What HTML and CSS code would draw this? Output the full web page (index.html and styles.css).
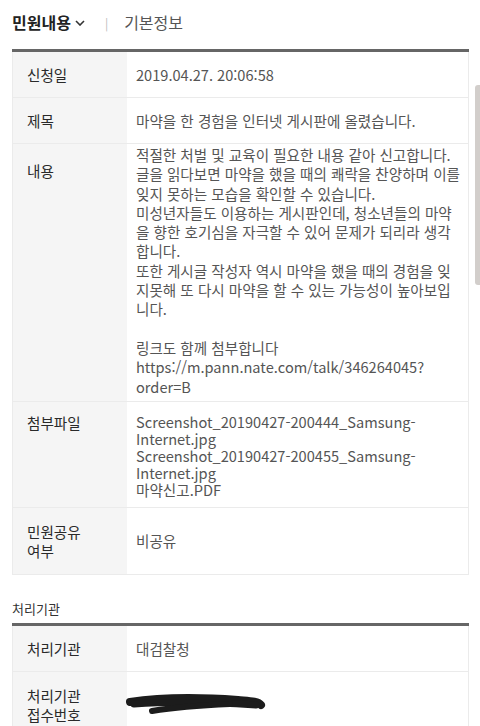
FILE: index.html
```html
<!DOCTYPE html>
<html lang="ko">
<head>
  <meta charset="UTF-8">
  <title>민원내용</title>
  <meta name="viewport" content="width=device-width, initial-scale=1">
  <link rel="stylesheet" href="styles.css">
</head>
<body>

<header class="tabs">
  <div class="tab active">민원내용
    <svg class="chev" width="10" height="6" viewBox="0 0 10 6"><path d="M1 1l4 4 4-4" fill="none" stroke="#333" stroke-width="1.6"/></svg>
  </div>
  <span class="sep">|</span>
  <div class="tab">기본정보</div>
</header>

<table class="info">
  <tr>
    <th>신청일</th>
    <td>2019.04.27. 20:06:58</td>
  </tr>
  <tr>
    <th>제목</th>
    <td>마약을 한 경험을 인터넷 게시판에 올렸습니다.</td>
  </tr>
  <tr class="top">
    <th class="pad">내용</th>
    <td class="body">적절한 처벌 및 교육이 필요한 내용 같아 신고합니다.<br>글을 읽다보면 마약을 했을 때의 쾌락을 찬양하며 이를 잊지 못하는 모습을 확인할 수 있습니다.<br>미성년자들도 이용하는 게시판인데, 청소년들의 마약을 향한 호기심을 자극할 수 있어 문제가 되리라 생각합니다.<br>또한 게시글 작성자 역시 마약을 했을 때의 경험을 잊지못해 또 다시 마약을 할 수 있는 가능성이 높아보입니다.<br><br>링크도 함께 첨부합니다<br>https://m.pann.nate.com/talk/346264045?<wbr>order=B</td>
  </tr>
  <tr class="top">
    <th class="pad2">첨부파일</th>
    <td class="files">Screenshot_20190427-200444_Samsung-Internet.jpg<br>Screenshot_20190427-200455_Samsung-Internet.jpg<br>마약신고.PDF</td>
  </tr>
  <tr class="tall">
    <th>민원공유<br>여부</th>
    <td>비공유</td>
  </tr>
</table>

<h3 class="sub">처리기관</h3>

<table class="info">
  <tr>
    <th>처리기관</th>
    <td>대검찰청</td>
  </tr>
  <tr class="tall">
    <th>처리기관<br>접수번호</th>
    <td>
      <svg class="blot" width="140" height="24" viewBox="0 0 140 24">
        <path d="M4 9 C30 5 70 4 112 7 C122 8 132 8 135 12" fill="none" stroke="#1c1c1c" stroke-width="8" stroke-linecap="round"/>
        <path d="M8 11 C40 9 80 9 130 12" fill="none" stroke="#1c1c1c" stroke-width="7" stroke-linecap="round"/>
        <path d="M26 18 C50 14 80 12 104 11" fill="none" stroke="#1c1c1c" stroke-width="6" stroke-linecap="round"/>
      </svg>
    </td>
  </tr>
</table>

<div class="thumb"></div>

</body>
</html>
```

FILE: styles.css
```css
body {
  font-family: "Noto Sans CJK KR", "Noto Sans", sans-serif;
  background: #fff;
  margin: 0;
  padding: 0;
  color: #333;
}

.tabs {
  height: 44px;
  display: flex;
  align-items: center;
  padding: 0 12px;
  font-size: 16px;
}

.tab {
  color: #555;
  display: flex;
  align-items: center;
}

.tab.active {
  color: #222;
  font-weight: bold;
}

.chev {
  margin-left: 4px;
  margin-top: 2px;
}

.sep {
  color: #bbb;
  font-size: 12px;
  margin: 0 16px 0 20px;
}

.info {
  width: 457px;
  margin: 5px 12px 0;
  border-collapse: collapse;
  border-top: 3px solid #666;
  font-size: 14.6px;
}

.info tr {
  border: 1px solid #ebebeb;
}

.info th {
  width: 88px;
  background: #f5f5f5;
  text-align: left;
  font-weight: normal;
  color: #2a2a2a;
  padding: 13px 12px 13px 14px;
  line-height: 19px;
  vertical-align: middle;
}

.info td {
  color: #555;
  padding: 13px 8px 13px 9px;
  line-height: 19px;
  vertical-align: middle;
}

.info tr.top th,
.info tr.top td {
  vertical-align: top;
}

.info th.pad {
  padding-top: 17px;
}

.info th.pad2 {
  padding-top: 11px;
}

.info td.body {
  line-height: 19.3px;
  padding-top: 1px;
  padding-bottom: 5px;
}

.info td.files {
  line-height: 17px;
  padding-top: 11px;
  padding-bottom: 9px;
}

.info tr.tall th,
.info tr.tall td {
  padding-top: 14px;
  padding-bottom: 14px;
}

.sub {
  font-size: 13px;
  font-weight: normal;
  color: #333;
  margin: 24px 12px 0;
  line-height: 20px;
}

.sub + .info {
  margin-top: 4px;
}

.blot {
  display: block;
  margin-left: -10px;
}

.thumb {
  position: absolute;
  right: 0;
  top: 85px;
  width: 5px;
  height: 200px;
  background: #d2cecb;
  border-radius: 3px 0 0 3px;
}
```
